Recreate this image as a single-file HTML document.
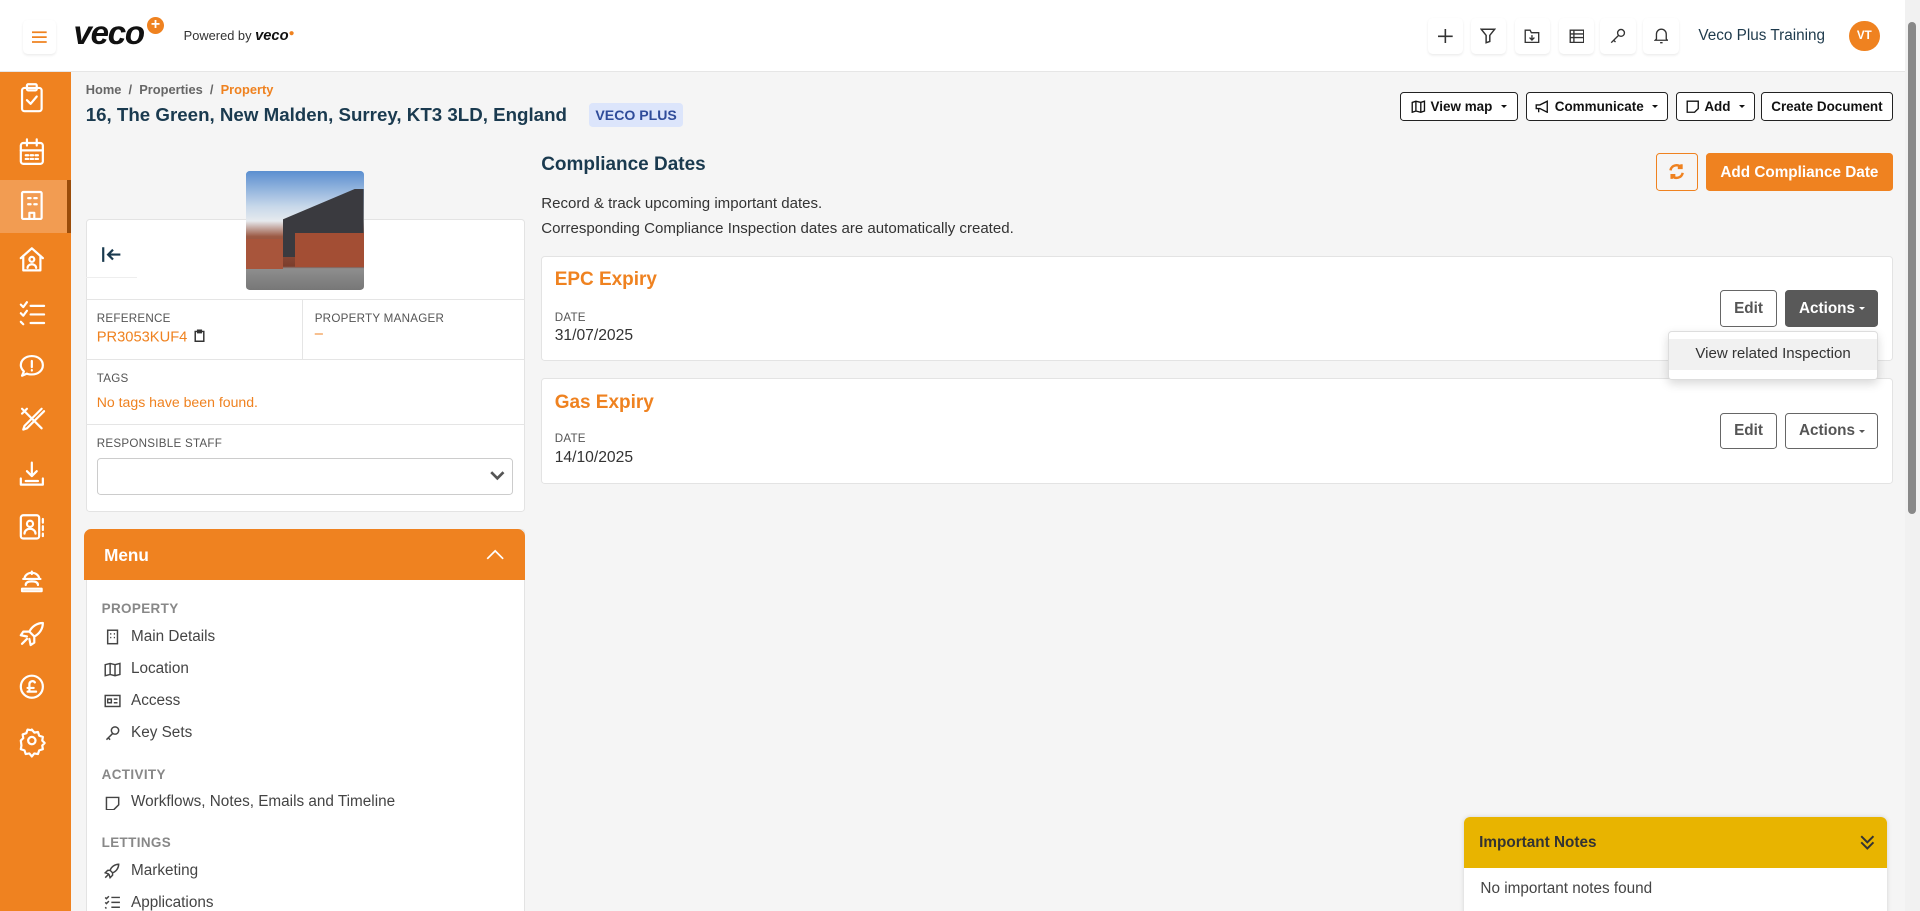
<!DOCTYPE html>
<html><head><meta charset="utf-8">
<style>
*{box-sizing:border-box;margin:0;padding:0}
html,body{width:1920px;height:911px;overflow:hidden;background:#f5f5f5}
#w{zoom:1.22449;width:1568px;height:744px;position:relative;font-family:"Liberation Sans",sans-serif;color:#333;overflow:hidden}
.a{position:absolute}
.hdr{left:0;top:0;width:1556px;height:59px;background:#fff;border-bottom:1px solid #e6e6e6}
.ib{width:29px;height:29px;border-radius:4px;background:#fff;box-shadow:0 1px 2px rgba(0,0,0,.08);display:flex;align-items:center;justify-content:center}
.sb{left:0;top:59px;width:58px;height:685px;background:#ef8220}
.btn{border:1px solid #222;border-radius:3px;background:#fff;font-size:11px;font-weight:bold;color:#111;display:flex;align-items:center;justify-content:center;gap:4px;height:24px;top:75px}
.card{background:#fff;border:1px solid #e3e3e3;border-radius:3px}
.lbl{font-size:9.5px;color:#555;letter-spacing:.2px}
.mi{font-size:12.5px;color:#444;left:85px;display:flex;align-items:center;gap:8px}
.mi svg{width:14px;height:13px;fill:none;stroke:#444;stroke-width:1.2}
.sec{font-size:11px;color:#888;left:83px;font-weight:bold;letter-spacing:.3px}
.ob{border:1px solid #666;border-radius:3px;background:#fff;font-size:12.5px;font-weight:bold;color:#555;display:flex;align-items:center;justify-content:center;height:30px}
.car{display:inline-block;border-left:3px solid transparent;border-right:3px solid transparent;border-top:3px solid currentColor;margin-left:3px;vertical-align:middle}
</style></head><body><div id="w">
<div class="a hdr"></div>
<div class="a ib" style="left:19px;top:16px;width:27px;height:28px"><svg width="12" height="10" viewBox="0 0 12 10"><path d="M0 1h12M0 5h12M0 9h12" stroke="#ef8220" stroke-width="1.4"/></svg></div>
<div class="a" style="left:60px;top:12px;font-size:27px;font-weight:bold;font-style:italic;color:#111;letter-spacing:-1px">veco</div>
<div class="a" style="left:120px;top:14px;width:14px;height:14px;border-radius:50%;background:#ef8220;color:#fff;font-size:13px;line-height:13px;text-align:center;font-weight:bold">+</div>
<div class="a" style="left:150px;top:23px;font-size:10.5px;color:#333">Powered by <b style="font-style:italic;font-size:12px;color:#111">veco</b><span style="color:#ef8220;font-size:8px;vertical-align:top">●</span></div>
<div class="a ib" style="left:1166px;top:15px"><svg width="12" height="12"><path d="M6 0v12M0 6h12" stroke="#333" stroke-width="1.3"/></svg></div>
<div class="a ib" style="left:1201px;top:15px"><svg width="13" height="13"><path d="M1 1h11L8 6v5L5 12V6z" fill="none" stroke="#333" stroke-width="1.2"/></svg></div>
<div class="a ib" style="left:1237px;top:15px"><svg width="13" height="12"><path d="M1 1h4l1 2h6v8H1z M6.5 5v4M4.5 7l2 2 2-2" fill="none" stroke="#333" stroke-width="1.1"/></svg></div>
<div class="a ib" style="left:1273px;top:15px"><svg width="13" height="12"><path d="M1 1h11v10H1zM1 4h11M1 7h11M4 1v10" fill="none" stroke="#333" stroke-width="1.1"/></svg></div>
<div class="a ib" style="left:1307px;top:15px"><svg width="13" height="13"><circle cx="9" cy="4" r="2.8" fill="none" stroke="#333" stroke-width="1.1"/><path d="M7 6L1 12M3 10l1.5 1.5" stroke="#333" stroke-width="1.1"/></svg></div>
<div class="a ib" style="left:1342px;top:15px"><svg width="12" height="13"><path d="M2 9V5a4 4 0 018 0v4l1 1H1zM5 12h2" fill="none" stroke="#333" stroke-width="1.1"/></svg></div>
<div class="a" style="left:1387px;top:22px;font-size:12.5px;color:#1e3a4c">Veco Plus Training</div>
<div class="a" style="left:1510px;top:17px;width:25px;height:25px;border-radius:50%;background:#ef8220;color:#fff;font-size:9.5px;font-weight:bold;line-height:25px;text-align:center">VT</div>
<div class="a" style="left:1556px;top:0;width:12px;height:744px;background:#f1f1f1"></div>
<div class="a" style="left:1558px;top:18px;width:7px;height:402px;background:#888;border-radius:4px"></div>

<div class="a sb"></div>
<div class="a" style="left:0;top:147px;width:58px;height:43px;background:#f29c52"></div>
<div class="a" style="left:55px;top:147px;width:3px;height:43px;background:#9a4c0a"></div>
<svg class="a" style="left:0;top:59px" width="58" height="570" fill="none" stroke="#fff" stroke-width="1.8" stroke-linecap="round" stroke-linejoin="round">
<g transform="translate(17,10)"><rect x="1" y="3" width="16" height="19" rx="2"/><rect x="5" y="0" width="8" height="5" rx="1"/><path d="M5 13l3 3 5-6"/></g>
<g transform="translate(16,55)"><rect x="1" y="3" width="18" height="17" rx="2"/><path d="M6 0v5M14 0v5M1 9h18M5 13h2M9 13h2M13 13h2M5 16h2M9 16h2M13 16h2"/></g>
<g transform="translate(17,98)"><rect x="1" y="0" width="16" height="22" rx="1"/><path d="M6 5h2M11 5h2M6 10h2M11 10h2M7 22v-5h4v5"/></g>
<g transform="translate(16,142)"><path d="M1 10L10 2l9 8M3 8v12h14V8"/><circle cx="10" cy="11" r="2"/><path d="M6.5 18a3.5 3 0 017 0"/></g>
<g transform="translate(16,187)"><path d="M1 3l2 2 3-4M1 10l2 2 3-4M1 17l2 2M9 4h11M9 11h11M9 18h11"/></g>
<g transform="translate(16,230)"><path d="M10 2c5.5 0 9 3.5 9 7.5S15.5 17 10 17c-1.5 0-3 0-4-.7L2 18l1.5-3.5C2 13 1 11.5 1 9.5 1 5.5 4.5 2 10 2zM10 6v5M10 13.5v.3"/></g>
<g transform="translate(16,273)"><path d="M2 2l16 16M18 2L4 16l-1 3 3-1L20 4M2 6l4-4"/></g>
<g transform="translate(16,318)"><path d="M10 1v11M6 8l4 4 4-4M1 14v5h18v-5M5 16h10"/></g>
<g transform="translate(16,361)"><rect x="1" y="1" width="15" height="19" rx="2"/><circle cx="8.5" cy="8" r="2.5"/><path d="M4 16a4.5 4 0 019 0M19 4v3M19 10v3M19 16v2"/></g>
<g transform="translate(16,405)"><path d="M4 9a6 5 0 0112 0zM3 9h14M10 3v2M5 14c0-2 2-3 5-3s5 1 5 3M2 19h16v-2H2z"/></g>
<g transform="translate(16,449)"><path d="M19 1c-5 0-9 3-11 7l4 4c4-2 7-6 7-11zM8 8L3 8 1 11l5 1M12 12l0 5-3 2-1-5M6 14l-4 4"/></g>
<g transform="translate(16,492)"><circle cx="10" cy="10" r="9"/><path d="M12.5 6.5a2.5 2.5 0 00-4.5 1.5v6M6.5 11h5M6.5 14h7"/></g>
<g transform="translate(16,536)"><circle cx="10" cy="10" r="3"/><path d="M10 1l2 2.5 3-.5 1 3 3 1-.5 3 2 2-2 2 .5 3-3 1-1 3-3-.5-2 2.5-2-2.5-3 .5-1-3-3-1 .5-3L1 10l2-2-.5-3 3-1 1-3 3 .5z"/></g>
</svg>

<div class="a" style="left:70px;top:67px;font-size:10.5px;color:#666;font-weight:bold">Home &nbsp;/&nbsp; Properties &nbsp;/&nbsp; <span style="color:#ef8220">Property</span></div>
<div class="a" style="left:70px;top:85px;font-size:15.3px;font-weight:bold;color:#1a3a4f">16, The Green, New Malden, Surrey, KT3 3LD, England</div>
<div class="a" style="left:481px;top:84px;width:77px;height:20px;background:#dce5fb;border-radius:3px;color:#2f4c9a;font-size:11.5px;font-weight:bold;text-align:center;line-height:20px">VECO PLUS</div>
<div class="a btn" style="left:1143px;width:97px"><svg width="12" height="11" fill="none" stroke="#111" stroke-width="1.1"><path d="M1 2l3-1 4 1 3-1v8l-3 1-4-1-3 1zM4 1v8M8 2v8"/></svg>View map<span class="car"></span></div>
<div class="a btn" style="left:1246px;width:116px"><svg width="12" height="11" fill="none" stroke="#111" stroke-width="1.1"><path d="M1 4h3l6-3v9L4 7H1zM3 7v3"/></svg>Communicate<span class="car"></span></div>
<div class="a btn" style="left:1369px;width:64px"><svg width="11" height="11" fill="none" stroke="#111" stroke-width="1.1"><path d="M1 1h9v6l-3 3H1z"/></svg>Add<span class="car"></span></div>
<div class="a btn" style="left:1438px;width:108px">Create Document</div>

<div class="a card" style="left:70px;top:179px;width:359px;height:239px"></div>
<div class="a" style="left:70px;top:190px;width:42px;height:37px;border-bottom:1px solid #eee"><svg style="margin:11px 0 0 13px" width="16" height="14" fill="none" stroke="#1a3a4f" stroke-width="1.8"><path d="M1 1v12M15 7H5M9 3L5 7l4 4"/></svg></div>
<div class="a" style="left:201px;top:140px;width:96px;height:97px;border-radius:3px;overflow:hidden;background:linear-gradient(#5b8fd0 0%,#c8d8ea 30%,#e6eaee 42%,#9c5a44 55%,#7b3d2c 80%,#8e8e8e 82%,#777 100%)">
<div class="a" style="left:30px;top:14px;width:66px;height:56px;background:#3a3a3f;clip-path:polygon(0 45%,90% 0,100% 0,100% 100%,0 100%)"></div>
<div class="a" style="left:40px;top:50px;width:56px;height:28px;background:#a34e34"></div>
<div class="a" style="left:0;top:55px;width:30px;height:25px;background:#a8553b"></div>
</div>
<div class="a" style="left:70px;top:244px;width:359px;border-top:1px solid #e5e5e5"></div>
<div class="a" style="left:247px;top:244px;height:49px;border-left:1px solid #e5e5e5"></div>
<div class="a lbl" style="left:79px;top:255px">REFERENCE</div>
<div class="a" style="left:79px;top:269px;font-size:12px;color:#ef8220">PR3053KUF4 <svg width="9" height="11" fill="none" stroke="#333" stroke-width="1.2" style="vertical-align:-1px;margin-left:2px"><path d="M1 2h7v8H1zM3 1h3v2H3z"/></svg></div>
<div class="a lbl" style="left:257px;top:255px">PROPERTY MANAGER</div>
<div class="a" style="left:257px;top:266px;font-size:12px;color:#ef8220">–</div>
<div class="a" style="left:70px;top:293px;width:359px;border-top:1px solid #e5e5e5"></div>
<div class="a lbl" style="left:79px;top:304px">TAGS</div>
<div class="a" style="left:79px;top:322px;font-size:11.5px;color:#ef8220">No tags have been found.</div>
<div class="a" style="left:70px;top:346px;width:359px;border-top:1px solid #e5e5e5"></div>
<div class="a lbl" style="left:79px;top:357px">RESPONSIBLE STAFF</div>
<div class="a" style="left:79px;top:374px;width:340px;height:30px;border:1px solid #ccc;border-radius:3px"><svg style="position:absolute;right:6px;top:10px" width="12" height="8" fill="none" stroke="#555" stroke-width="2.2"><path d="M1 1l5 5 5-5"/></svg></div>

<div class="a card" style="left:70px;top:432px;width:359px;height:320px"></div>
<div class="a" style="left:69px;top:432px;width:360px;height:42px;background:#ef8220;border-radius:6px 6px 0 0"></div>
<div class="a" style="left:85px;top:445px;color:#fff;font-size:14px;font-weight:bold">Menu</div>
<svg class="a" style="left:397px;top:448px" width="15" height="9" fill="none" stroke="#fff" stroke-width="1.4"><path d="M1 8l6.5-6.5L14 8"/></svg>
<div class="a sec" style="top:491px">PROPERTY</div>
<div class="a mi" style="top:513px"><svg><rect x="3" y="1" width="8" height="11"/><path d="M5 4h1M8 4h1M5 7h1M8 7h1"/></svg>Main Details</div>
<div class="a mi" style="top:539px"><svg><path d="M1 3l4-1 4 1 4-1v9l-4 1-4-1-4 1zM5 2v9M9 3v9"/></svg>Location</div>
<div class="a mi" style="top:565px"><svg><rect x="1" y="2" width="12" height="9"/><path d="M3 5h3v3H3zM8 5h3M8 8h3"/></svg>Access</div>
<div class="a mi" style="top:591px"><svg><circle cx="9" cy="4.5" r="3"/><path d="M7 7l-5 5M3.5 10.5l1.5 1.5"/></svg>Key Sets</div>
<div class="a sec" style="top:626px">ACTIVITY</div>
<div class="a mi" style="top:648px"><svg><path d="M2 2h10v6l-4 4H2z"/></svg>Workflows, Notes, Emails and Timeline</div>
<div class="a sec" style="top:682px">LETTINGS</div>
<div class="a mi" style="top:704px"><svg><path d="M12 1c-3 0-6 2-7 5l2 2c3-1 5-4 5-7zM5 6H3L1 8l3 1M7 8v2L5 12l-1-3M4 9l-3 3"/></svg>Marketing</div>
<div class="a mi" style="top:730px"><svg><path d="M1 2l1 1 2-2M1 6l1 1 2-2M1 10l1 1M6 2h7M6 6h7M6 10h7"/></svg>Applications</div>

<div class="a" style="left:442px;top:126px;font-size:15.5px;font-weight:bold;color:#1a3a4f">Compliance Dates</div>
<div class="a" style="left:442px;top:157px;font-size:12.3px;color:#333;line-height:20px">Record &amp; track upcoming important dates.<br>Corresponding Compliance Inspection dates are automatically created.</div>
<div class="a" style="left:1352px;top:125px;width:35px;height:31px;border:1px solid #ef8220;border-radius:3px;display:flex;align-items:center;justify-content:center"><svg width="14" height="14" fill="none" stroke="#ef8220" stroke-width="2"><path d="M2 6a5 5 0 019-2M12 8a5 5 0 01-9 2M11 1v3H8M3 13v-3h3"/></svg></div>
<div class="a" style="left:1393px;top:125px;width:153px;height:31px;background:#ef8220;border-radius:3px;color:#fff;font-size:12.5px;font-weight:bold;text-align:center;line-height:32px">Add Compliance Date</div>

<div class="a card" style="left:442px;top:209px;width:1104px;height:86px"></div>
<div class="a" style="left:453px;top:220px;font-size:15.5px;font-weight:bold;color:#ef8220">EPC Expiry</div>
<div class="a lbl" style="left:453px;top:254px">DATE</div>
<div class="a" style="left:453px;top:267px;font-size:12.8px">31/07/2025</div>
<div class="a ob" style="left:1405px;top:237px;width:46px">Edit</div>
<div class="a ob" style="left:1458px;top:237px;width:76px;background:#595959;border-color:#595959;color:#fff">Actions<span class="car"></span></div>

<div class="a card" style="left:442px;top:309px;width:1104px;height:86px"></div>
<div class="a" style="left:453px;top:320px;font-size:15.5px;font-weight:bold;color:#ef8220">Gas Expiry</div>
<div class="a lbl" style="left:453px;top:353px">DATE</div>
<div class="a" style="left:453px;top:367px;font-size:12.8px">14/10/2025</div>
<div class="a ob" style="left:1405px;top:337px;width:46px">Edit</div>
<div class="a ob" style="left:1458px;top:337px;width:76px">Actions<span class="car"></span></div>

<div class="a" style="left:1362px;top:270px;width:172px;height:40px;background:#fff;border:1px solid #ddd;border-radius:3px;box-shadow:0 3px 8px rgba(0,0,0,.15)"></div>
<div class="a" style="left:1363px;top:277px;width:170px;height:25px;background:#f1f1f1;font-size:12.3px;color:#333;line-height:25px;text-align:center">View related Inspection</div>

<div class="a" style="left:1196px;top:667px;width:345px;height:80px;background:#fff;border-radius:5px 5px 0 0;box-shadow:0 0 4px rgba(0,0,0,.15);overflow:hidden">
<div style="height:42px;background:#e8b400;padding:14px 12px;font-size:12.5px;font-weight:bold;color:#333;position:relative">Important Notes<svg style="position:absolute;right:10px;top:15px" width="12" height="12" fill="none" stroke="#333" stroke-width="1.6"><path d="M1 1l5 5 5-5M1 6l5 5 5-5"/></svg></div>
<div style="padding:10px 13px;font-size:12.5px;color:#444">No important notes found</div>
</div>
</div></body></html>
